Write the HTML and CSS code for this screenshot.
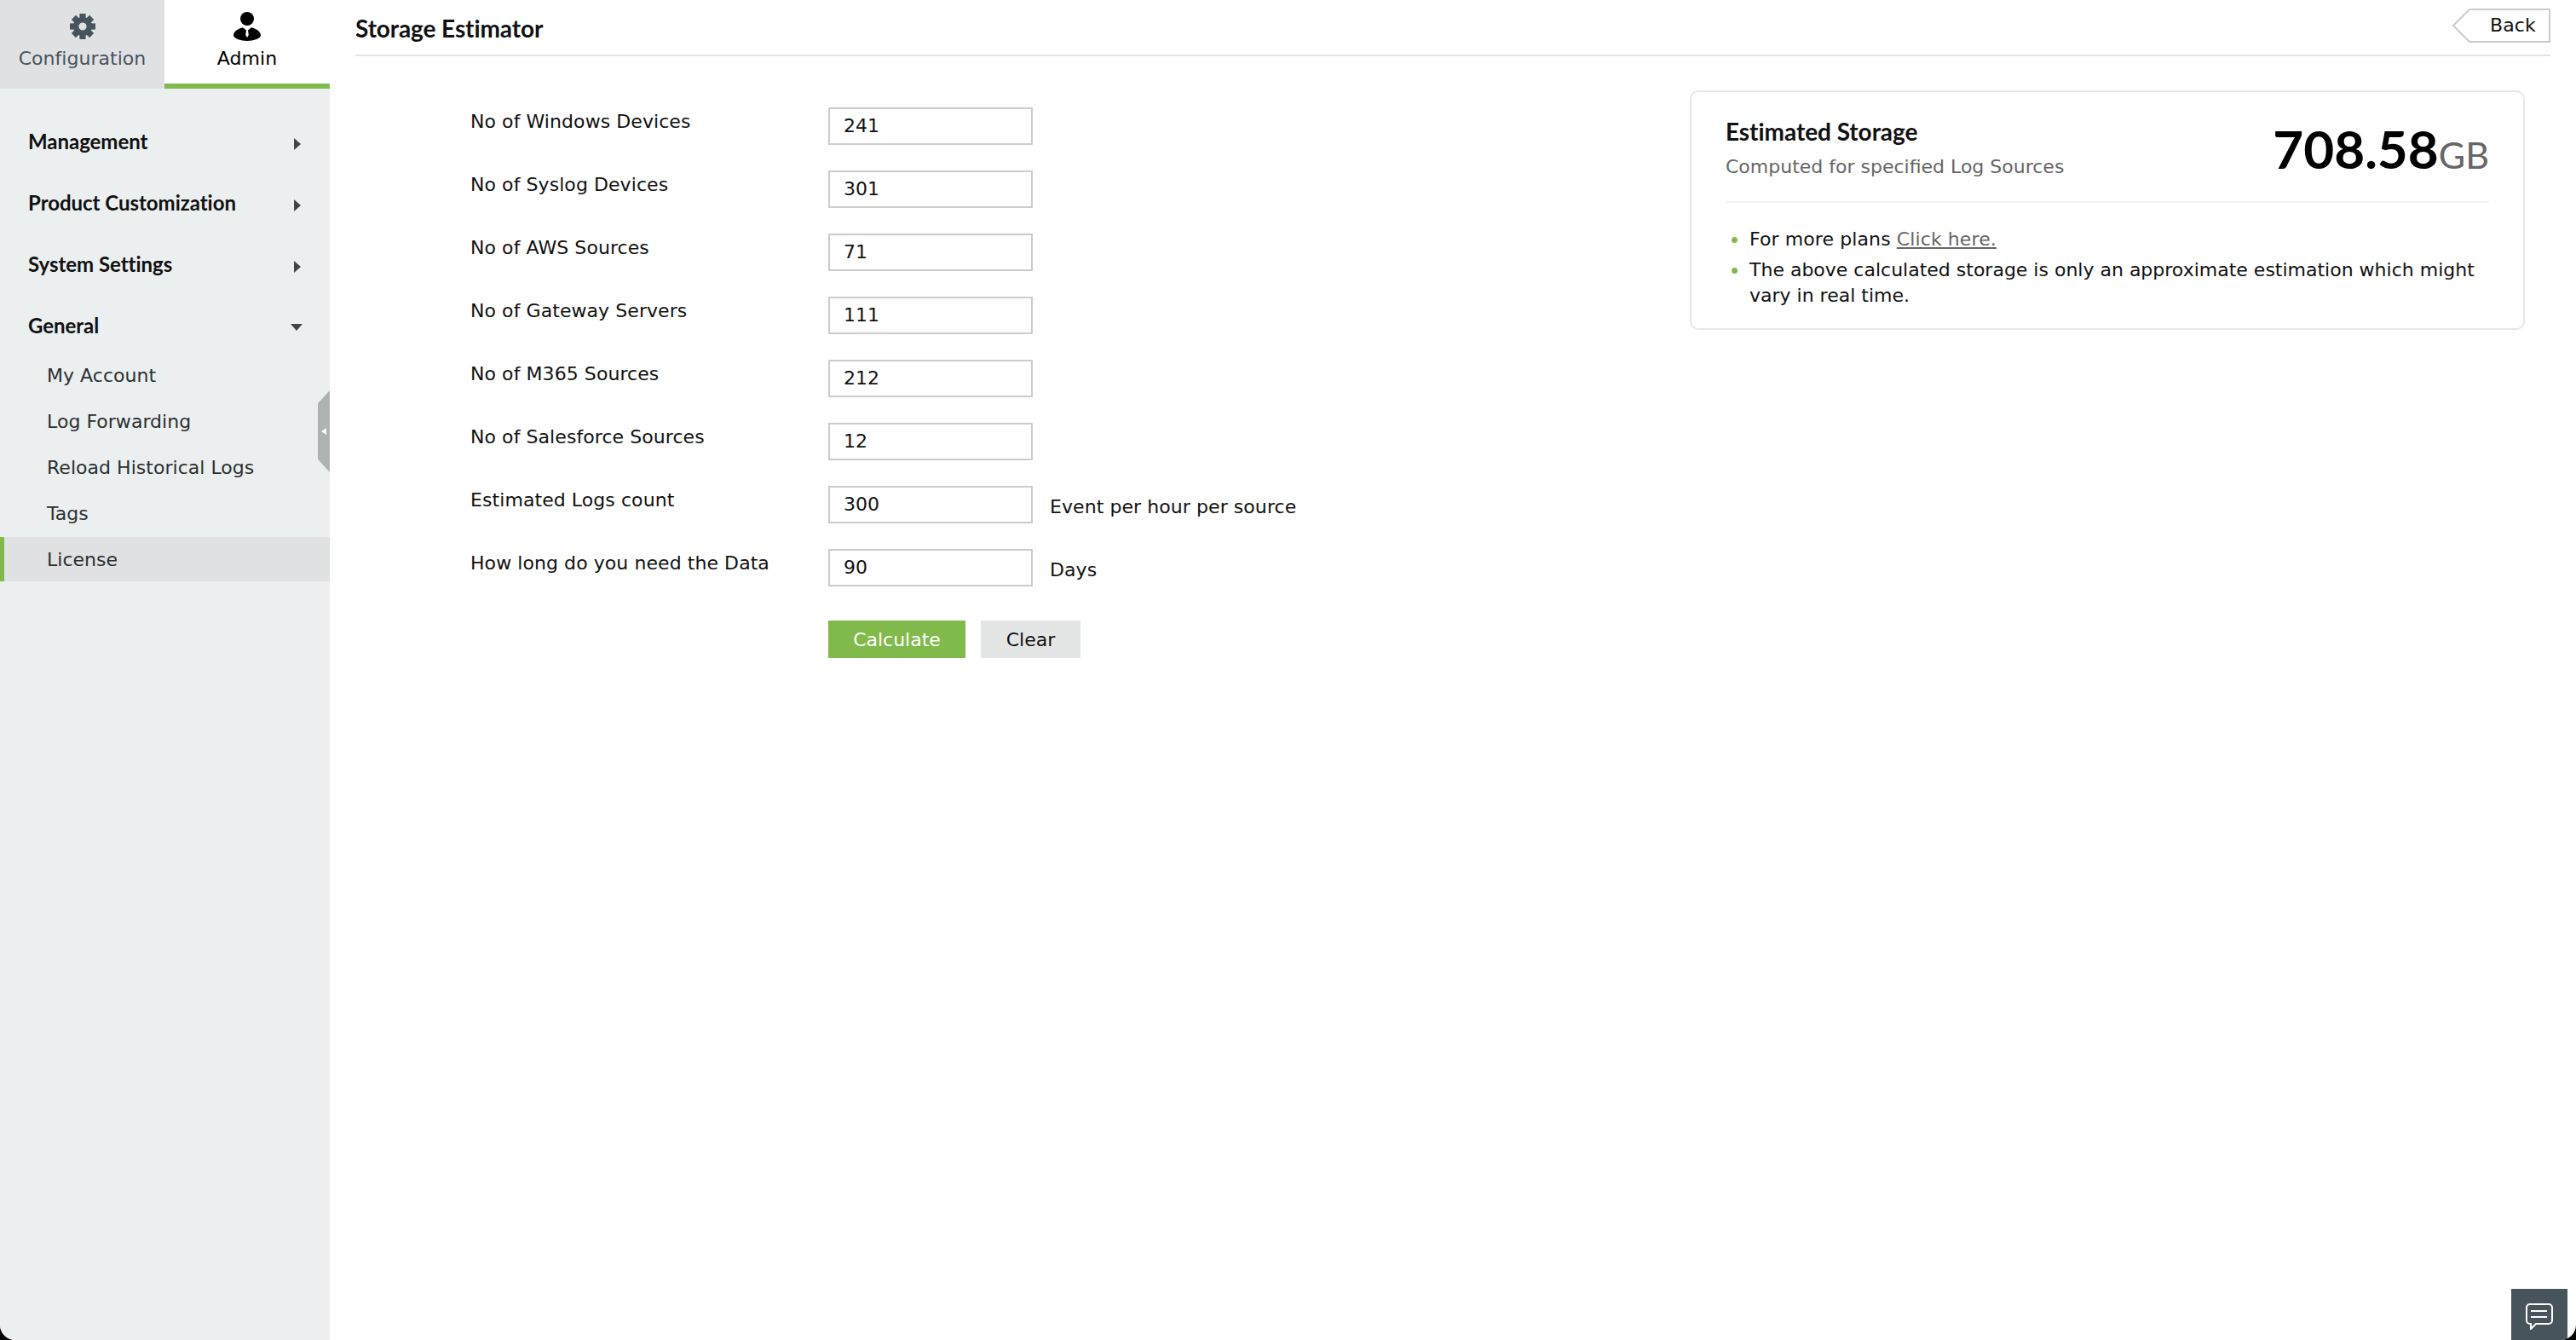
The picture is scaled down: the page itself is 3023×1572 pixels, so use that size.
FILE: index.html
```html
<!DOCTYPE html>
<html lang="en">
<head>
<meta charset="utf-8">
<title>Storage Estimator</title>
<link rel="stylesheet" href="styles.css">
</head>
<body>
<div class="app">
  <aside class="sidebar">
    <div class="tabs">
      <div class="tab tab-config">
        <svg class="tab-icon" width="30" height="30" viewBox="-15 -15 30 30" aria-hidden="true">
          <g fill="#47545c">
            <rect x="-3.6" y="-15" width="7.2" height="7"/>
            <rect x="-3.6" y="-15" width="7.2" height="7" transform="rotate(45)"/>
            <rect x="-3.6" y="-15" width="7.2" height="7" transform="rotate(90)"/>
            <rect x="-3.6" y="-15" width="7.2" height="7" transform="rotate(135)"/>
            <rect x="-3.6" y="-15" width="7.2" height="7" transform="rotate(180)"/>
            <rect x="-3.6" y="-15" width="7.2" height="7" transform="rotate(225)"/>
            <rect x="-3.6" y="-15" width="7.2" height="7" transform="rotate(270)"/>
            <rect x="-3.6" y="-15" width="7.2" height="7" transform="rotate(315)"/>
          </g>
          <circle r="7.8" fill="none" stroke="#47545c" stroke-width="6.4"/>
        </svg>
        <span>Configuration</span>
      </div>
      <div class="tab tab-admin">
        <svg class="tab-icon" width="32" height="34" viewBox="0 0 32 34" aria-hidden="true">
          <circle cx="16" cy="8" r="8"/>
          <path d="M11 18.2 L15 21.5 L14.2 27 L16 30 L17.8 27 L17 21.5 L21 18.2 C26 19.5 32 22.5 32 27.5 C32 31 24 34 16 34 C8 34 0 31 0 27.5 C0 22.5 6 19.5 11 18.2 Z"/>
        </svg>
        <span>Admin</span>
      </div>
    </div>
    <nav class="nav">
      <div class="nav-head"><span>Management</span><i class="caret-right"></i></div>
      <div class="nav-head"><span>Product Customization</span><i class="caret-right"></i></div>
      <div class="nav-head"><span>System Settings</span><i class="caret-right"></i></div>
      <div class="nav-head"><span>General</span><i class="caret-down"></i></div>
      <ul class="subnav">
        <li>My Account</li>
        <li>Log Forwarding</li>
        <li>Reload Historical Logs</li>
        <li>Tags</li>
        <li class="active">License</li>
      </ul>
    </nav>
    <div class="collapse-handle"><i></i></div>
  </aside>
  <main class="main">
    <header class="page-head">
      <h1>Storage Estimator</h1>
      <div class="back">
        <svg class="back-shape" width="116" height="40" viewBox="0 0 116 40" aria-hidden="true">
          <path d="M115 1 H21 L2 20 L21 39 H115 Z" fill="#fff" stroke="#ccc" stroke-width="2"/>
        </svg>
        <span>Back</span>
      </div>
    </header>
    <div class="content">
      <form class="form">
        <div class="row"><label>No of Windows Devices</label><input class="field" value="241"></div>
        <div class="row"><label>No of Syslog Devices</label><input class="field" value="301"></div>
        <div class="row"><label>No of AWS Sources</label><input class="field" value="71"></div>
        <div class="row"><label>No of Gateway Servers</label><input class="field" value="111"></div>
        <div class="row"><label>No of M365 Sources</label><input class="field" value="212"></div>
        <div class="row"><label>No of Salesforce Sources</label><input class="field" value="12"></div>
        <div class="row"><label>Estimated Logs count</label><input class="field" value="300"><span class="suffix">Event per hour per source</span></div>
        <div class="row"><label>How long do you need the Data</label><input class="field" value="90"><span class="suffix">Days</span></div>
        <div class="actions">
          <button type="button" class="btn btn-primary">Calculate</button>
          <button type="button" class="btn btn-plain">Clear</button>
        </div>
      </form>
      <section class="card">
        <div class="card-top">
          <div>
            <h2>Estimated Storage</h2>
            <p class="card-sub">Computed for specified Log Sources</p>
          </div>
          <div class="amount">708.58<span>GB</span></div>
        </div>
        <ul class="notes">
          <li class="note-plans">For more plans <a href="#">Click here.</a></li>
          <li>The above calculated storage is only an approximate estimation which might vary in real time.</li>
        </ul>
      </section>
    </div>
  </main>
  <div class="chat">
    <svg width="32" height="32" viewBox="0 0 32 32" aria-hidden="true">
      <path d="M5 2 H27 A4 4 0 0 1 31 6 V21 A4 4 0 0 1 27 25 H12 L6 31 V25 H5 A4 4 0 0 1 1 21 V6 A4 4 0 0 1 5 2 Z" fill="none" stroke="#fff" stroke-width="2"/>
      <path d="M6 10 H25 M6 17 H25" stroke="#fff" stroke-width="2.2"/>
    </svg>
  </div>
</div>
</body>
</html>
```

FILE: styles.css
```css
* { box-sizing: border-box; }
html, body { margin: 0; height: 100%; }
body {
  background: #000;
  font-family: "DejaVu Sans", sans-serif;
  font-size: 22px;
  letter-spacing: 0.07px;
  color: #111;
  overflow: hidden;
}
.app {
  position: relative;
  display: flex;
  height: 1572px;
  background: #fff;
  border-radius: 0 0 18px 18px;
  overflow: hidden;
}
.sidebar {
  position: relative;
  width: 387px;
  flex: none;
  background: #ebeff0;
  letter-spacing: 0.03px;
}
.tabs { display: flex; height: 104px; }
.tab {
  display: flex;
  flex-direction: column;
  align-items: center;
  font-size: 22px;
  line-height: 26px;
}
.tab-config {
  width: 193px;
  padding-top: 16px;
  background: #e0e1e3;
  color: #47545c;
}
.tab-admin {
  flex: 1;
  padding-top: 14px;
  background: #fff;
  color: #000;
  border-bottom: 6px solid #7fba4b;
}
.tab-icon { display: block; flex: none; }
.tab-config span { margin-top: 10px; }
.tab-admin span { margin-top: 8px; }
.nav { padding-top: 37px; }
.nav-head {
  display: flex;
  align-items: center;
  justify-content: space-between;
  height: 52px;
  margin-bottom: 20px;
  padding: 0 32px 4px 33px;
  font-family: Lato, sans-serif;
  font-weight: 700;
  font-size: 24px;
  letter-spacing: -0.03px;
  color: #111;
}
.nav-head:nth-child(4) { margin-bottom: 5px; }
.caret-right {
  width: 0;
  height: 0;
  border-left: 8px solid #444;
  border-top: 7px solid transparent;
  border-bottom: 7px solid transparent;
  margin: 8px 2px 0 0;
}
.caret-down {
  width: 0;
  height: 0;
  margin-top: 6px;
  border-top: 8px solid #444;
  border-left: 7px solid transparent;
  border-right: 7px solid transparent;
}
.subnav { list-style: none; margin: 0; padding: 0; }
.subnav li {
  display: flex;
  align-items: center;
  height: 52px;
  margin-bottom: 2px;
  padding-left: 55px;
  color: #2b2f31;
}
.subnav li.active {
  background: #e0e1e3;
  border-left: 5px solid #7fba4b;
  padding-left: 50px;
}
.collapse-handle {
  position: absolute;
  top: 458px;
  right: 0;
  width: 14px;
  height: 96px;
  background: #adb2b5;
  clip-path: polygon(100% 0, 100% 100%, 0 84%, 0 16%);
}
.collapse-handle i {
  position: absolute;
  left: 4px;
  top: 44px;
  border-right: 6px solid #fff;
  border-top: 4px solid transparent;
  border-bottom: 4px solid transparent;
}
.main {
  flex: 1;
  min-width: 0;
  padding: 0 30px;
}
.page-head {
  display: flex;
  justify-content: space-between;
  align-items: flex-start;
  height: 66px;
  border-bottom: 2px solid #e3e3e3;
}
.page-head h1 {
  margin: 15px 0 0;
  font-family: Lato, sans-serif;
  font-weight: 700;
  font-size: 28px;
  letter-spacing: -0.1px;
  line-height: 36px;
  color: #111;
}
.back {
  position: relative;
  width: 116px;
  height: 40px;
  margin-top: 10px;
}
.back-shape { position: absolute; left: 0; top: 0; }
.back span {
  position: absolute;
  left: 45px;
  top: 6px;
  line-height: 28px;
}
.content { display: flex; padding-top: 40px; }
.form {
  flex: 1;
  padding: 20px 0 0 135px;
}
.row {
  display: flex;
  align-items: flex-start;
  height: 44px;
  margin-bottom: 30px;
}
.row label {
  width: 420px;
  flex: none;
  line-height: 33px;
}
.field {
  width: 240px;
  height: 44px;
  flex: none;
  padding: 0 0 2px 16px;
  border: 2px solid #ccc;
  border-radius: 0;
  background: #fff;
  font: 22px "DejaVu Sans", sans-serif;
  color: #111;
}
.suffix {
  margin-left: 20px;
  line-height: 50px;
}
.actions {
  display: flex;
  gap: 18px;
  margin: 40px 0 0 420px;
}
.btn {
  height: 44px;
  border: 0;
  padding: 0;
  font: 22px "DejaVu Sans", sans-serif;
}
.btn-primary { width: 161px; background: #7fba4b; color: #fff; }
.btn-plain { width: 117px; background: #e4e6e6; color: #111; }
.card {
  width: 980px;
  height: 281px;
  flex: none;
  margin-right: 30px;
  padding: 0 40px;
  border: 2px solid #e6e8e8;
  border-radius: 10px;
  letter-spacing: 0;
}
.card-top {
  display: flex;
  justify-content: space-between;
  height: 130px;
  border-bottom: 2px solid #eef2f2;
}
.card h2 {
  margin: 28px 0 0;
  font-family: Lato, sans-serif;
  font-weight: 700;
  font-size: 28px;
  letter-spacing: -0.05px;
  line-height: 36px;
  color: #111;
}
.card-sub {
  margin: 8px 0 0;
  line-height: 32px;
  color: #666;
}
.amount {
  margin-top: 28px;
  font-family: Lato, sans-serif;
  font-weight: 700;
  font-size: 62px;
  line-height: 76px;
  color: #000;
}
.amount span {
  font-weight: 400;
  font-size: 43px;
  color: #666;
}
.notes {
  list-style: none;
  margin: 28px 0 0;
  padding: 0 0 0 28px;
}
.notes li {
  position: relative;
  margin-bottom: 6px;
  line-height: 30px;
}
.notes .note-plans { letter-spacing: 0.1px; }
.notes li::before {
  content: "";
  position: absolute;
  left: -21px;
  top: 12px;
  width: 7px;
  height: 7px;
  border-radius: 50%;
  background: #7fba4b;
}
.notes a { color: #666; text-decoration: underline; }
.chat {
  position: absolute;
  right: 10px;
  bottom: 0;
  display: flex;
  align-items: center;
  justify-content: center;
  width: 66px;
  height: 60px;
  padding-top: 4px;
  background: #47545c;
}
```
